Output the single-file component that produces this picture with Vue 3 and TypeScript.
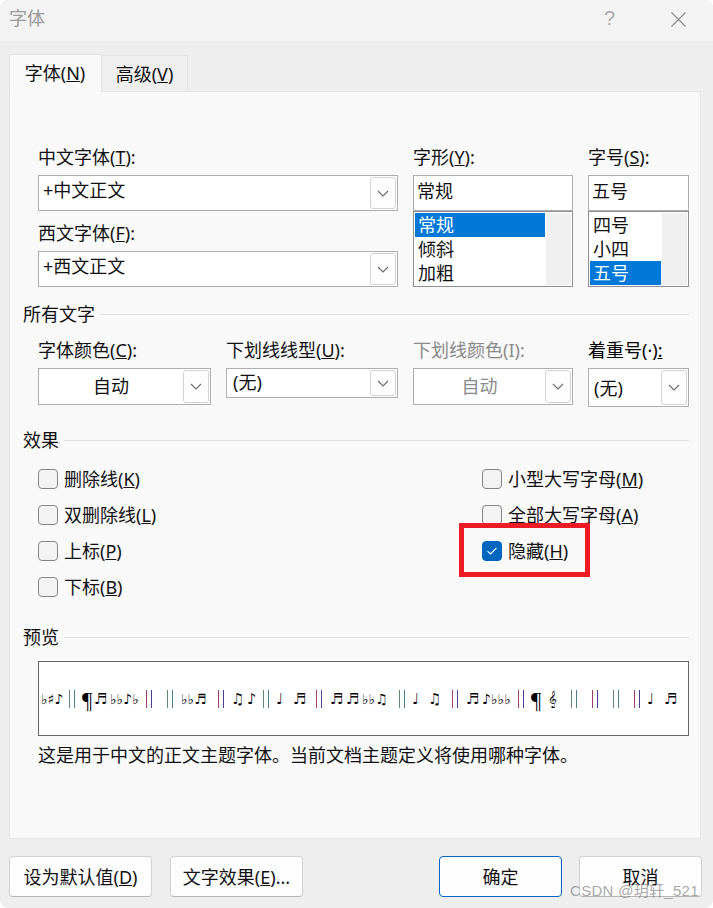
<script setup lang="ts">
interface Glyph { s: string; x: number; bar?: 'g' | 'p' }
const glyphs: Glyph[] = [
  { s: '♭♯♪', x: 41 }, { s: '', x: 69, bar: 'g' }, { s: '¶', x: 82 }, { s: '♬', x: 94 },
  { s: '♭♭♪♭', x: 110 }, { s: '', x: 146, bar: 'p' }, { s: '', x: 167, bar: 'g' }, { s: '♭♭♬', x: 181 },
  { s: '', x: 218, bar: 'p' }, { s: '♫', x: 231 }, { s: '♪', x: 247 }, { s: '', x: 263, bar: 'g' },
  { s: '♩', x: 276 }, { s: '♬', x: 293 }, { s: '', x: 316, bar: 'p' }, { s: '♬', x: 330 },
  { s: '♬', x: 346 }, { s: '♭♭♫', x: 362 }, { s: '', x: 399, bar: 'g' }, { s: '♩', x: 412 },
  { s: '♫', x: 428 }, { s: '', x: 452, bar: 'p' }, { s: '♬', x: 466 }, { s: '♪♭♭♭', x: 482 },
  { s: '', x: 518, bar: 'p' }, { s: '¶', x: 531 }, { s: '𝄞', x: 548 }, { s: '', x: 571, bar: 'g' },
  { s: '', x: 592, bar: 'p' }, { s: '', x: 613, bar: 'g' }, { s: '', x: 634, bar: 'p' }, { s: '♩', x: 647 },
  { s: '♬', x: 664 }
]
const cellWidth = (i: number): string => {
  const next = i + 1 < glyphs.length ? glyphs[i + 1].x : 680
  return `${next - glyphs[i].x}px`
}
const styleRows = ['常规', '倾斜', '加粗']
const sizeRows = ['四号', '小四', '五号']
const leftChecks = [
  { t: '删除线(', k: 'K' }, { t: '双删除线(', k: 'L' }, { t: '上标(', k: 'P' }, { t: '下标(', k: 'B' }
]
const rightChecks = [
  { t: '小型大写字母(', k: 'M' }, { t: '全部大写字母(', k: 'A' }
]
const effects = [
  { cls: 'c-color', pre: '字体颜色(', key: 'C', post: '):', value: '自动', center: true, off: false },
  { cls: 'c-line', pre: '下划线线型(', key: 'U', post: '):', value: '(无)', center: false, off: false },
  { cls: 'c-linecolor', pre: '下划线颜色(I):', key: '', post: '', value: '自动', center: true, off: true },
  { cls: 'c-mark', pre: '着重号(·)', key: ':', post: '', value: '(无)', center: false, off: false }
]
</script>

<template>
  <div class="dialog">
    <header class="titlebar">
      <span class="title">字体</span>
      <span class="help">?</span>
      <svg class="close" width="15" height="15" viewBox="0 0 15 15"><path d="M0.5 0.5 14.5 14.5M14.5 0.5 0.5 14.5" stroke="#8a8a8a" stroke-width="1.1" fill="none" /></svg>
    </header>

    <nav class="tabs">
      <div class="tab active">字体(<u>N</u>)</div>
      <div class="tab">高级(<u>V</u>)</div>
    </nav>

    <main class="panel">
      <section class="font-grid">
        <div class="names">
          <label class="lbl">中文字体(<u>T</u>):</label>
          <div class="field combo">
            <span class="val">+中文正文</span>
            <span class="drop"><svg width="12" height="7" viewBox="0 0 12 7"><path d="M1 1 6 6 11 1" stroke="#6b6b6b" stroke-width="1.1" fill="none" /></svg></span>
          </div>
          <label class="lbl second">西文字体(<u>F</u>):</label>
          <div class="field combo">
            <span class="val">+西文正文</span>
            <span class="drop"><svg width="12" height="7" viewBox="0 0 12 7"><path d="M1 1 6 6 11 1" stroke="#6b6b6b" stroke-width="1.1" fill="none" /></svg></span>
          </div>
        </div>
        <div class="picker">
          <label class="lbl">字形(<u>Y</u>):</label>
          <div class="field"><span class="val short">常规</span></div>
          <ul class="list">
            <li class="rows">
              <div v-for="(r, i) in styleRows" :key="r" class="row" :class="{ sel: i === 0 }">{{ r }}</div>
            </li>
            <li class="track"></li>
          </ul>
        </div>
        <div class="picker">
          <label class="lbl">字号(<u>S</u>):</label>
          <div class="field"><span class="val short">五号</span></div>
          <ul class="list">
            <li class="rows">
              <div v-for="(r, i) in sizeRows" :key="r" class="row" :class="{ sel: i === 2 }">{{ r }}</div>
            </li>
            <li class="track"></li>
          </ul>
        </div>
      </section>

      <div class="group g-all"><span>所有文字</span><i></i></div>
      <section class="all-grid">
        <div v-for="e in effects" :key="e.cls" class="cell" :class="[e.cls, { off: e.off }]">
          <label class="lbl">{{ e.pre }}<u v-if="e.key">{{ e.key }}</u>{{ e.post }}</label>
          <div class="field combo">
            <span class="val" :class="e.center ? 'mid' : 'plain'">{{ e.value }}</span>
            <span class="drop"><svg width="12" height="7" viewBox="0 0 12 7"><path d="M1 1 6 6 11 1" stroke="#6b6b6b" stroke-width="1.1" fill="none" /></svg></span>
          </div>
        </div>
      </section>

      <div class="group g-fx"><span>效果</span><i></i></div>
      <section class="checks">
        <div v-for="c in leftChecks" :key="c.k" class="check"><span class="box"></span><span>{{ c.t }}<u>{{ c.k }}</u>)</span></div>
        <div v-for="c in rightChecks" :key="c.k" class="check"><span class="box"></span><span>{{ c.t }}<u>{{ c.k }}</u>)</span></div>
        <div class="check hidden-row">
          <span class="box on"><svg width="12" height="10" viewBox="0 0 12 10"><path d="M1.5 5.2 4.5 8 10.5 1.8" stroke="#fff" stroke-width="1.1" fill="none" /></svg></span>
          <span>隐藏(<u>H</u>)</span>
          <span class="mark"></span>
        </div>
      </section>

      <div class="group g-pre"><span>预览</span><i></i></div>
      <section class="preview">
        <span
          v-for="(g, i) in glyphs"
          :key="i"
          class="glyph"
          :class="{ seq: g.s.length > 1 && g.s !== '𝄞', pil: g.s === '¶' }"
          :style="{ width: cellWidth(i) }"
        >
          <i v-if="g.bar" class="bar" :class="g.bar === 'g' ? 'bar-g' : 'bar-p'"></i>
          <template v-else>{{ g.s }}</template>
        </span>
      </section>
      <p class="note">这是用于中文的正文主题字体。当前文档主题定义将使用哪种字体。</p>
    </main>

    <footer class="actions">
      <button class="btn b-default">设为默认值(<u>D</u>)</button>
      <button class="btn b-effect">文字效果(<u>E</u>)...</button>
      <button class="btn b-act primary">确定</button>
      <button class="btn b-act">取消</button>
    </footer>
    <span class="watermark">CSDN @玥轩_521</span>
  </div>
</template>

<style>
html, body { background: #fff; }
</style>

<style scoped>
.dialog {
  position: relative;
  width: 713px;
  height: 908px;
  box-sizing: border-box;
  overflow: hidden;
  background: #eeeeee;
  border-radius: 8px;
  color: #111;
  font-family: "Noto Sans", "Noto Sans CJK SC", sans-serif;
  font-size: 18px;
  line-height: 24px;
}
u { text-underline-offset: 1px; text-decoration-thickness: 1px; }

.titlebar {
  height: 41px;
  display: flex;
  align-items: center;
  padding: 0 0 5px 9px;
  background: #f3f3f3;
  box-sizing: border-box;
}
.title { color: #9a9a9a; flex: 1; }
.help { color: #a8a8a8; width: 67px; font-size: 20px; font-family: "Liberation Sans", sans-serif; }
.close { margin-right: 27px; margin-top: 2px; }

.tabs {
  height: 50px;
  display: flex;
  align-items: flex-end;
  padding-left: 9px;
  box-sizing: border-box;
}
.tab {
  width: 86px;
  height: 36px;
  box-sizing: border-box;
  border: 1px solid #e3e3e3;
  border-bottom: none;
  border-left: none;
  background: #efefef;
  text-align: center;
  line-height: 36px;
}
.tab.active {
  width: 93px;
  height: 38px;
  border-left: 1px solid #e3e3e3;
  background: #f9f9f9;
  line-height: 37px;
  padding-right: 1px;
  position: relative;
  top: 1px;
}

.panel {
  width: 692px;
  height: 748px;
  margin-left: 9px;
  box-sizing: border-box;
  background: #f9f9f9;
  border: 1px solid #e5e5e5;
  padding: 54px 11px 0 13px;
}

.lbl { display: block; height: 24px; line-height: 22px; margin-bottom: 5px; white-space: nowrap; }
.field {
  display: flex;
  align-items: center;
  box-sizing: border-box;
  height: 36px;
  background: #fff;
  border: 1px solid #adadb3;
  position: relative;
}
.val { flex: 1; padding-left: 4px; position: relative; top: -3px; white-space: nowrap; }
.val.short { padding-left: 3px; top: -2px; }
.val.mid { text-align: center; padding-left: 0; top: -1px; }
.val.plain { padding-left: 6px; top: -1px; }
.c-mark .val.plain { padding-left: 5px; top: 0; }
.c-mark .lbl { color: #000; }
.combo { padding-right: 1px; }
.drop {
  width: 26px;
  height: calc(100% - 2px);
  box-sizing: border-box;
  display: flex;
  align-items: center;
  justify-content: center;
  background: #fdfdfd;
  border: 1px solid #d4d4d4;
  border-radius: 3px;
}

.font-grid {
  display: grid;
  grid-template-columns: 360px 160px 101px;
  column-gap: 15px;
  padding-left: 15px;
}
.second { margin-top: 11px; }
.list {
  list-style: none;
  margin: 0;
  box-sizing: border-box;
  height: 76px;
  padding: 1px;
  background: #fff;
  border: 1px solid #8f8f94;
  display: flex;
  gap: 1px;
}
.rows { flex: 1; }
.row { height: 24px; line-height: 24px; padding-left: 3px; }
.row.sel { background: #0078d7; color: #fff; }
.track { width: 25px; background: #f0f0f0; }

.group {
  display: flex;
  align-items: center;
  height: 24px;
  gap: 5px;
}
.group i { flex: 1; height: 1px; background: #e0e0e0; position: relative; top: -1px; }
.group span { position: relative; top: -1px; }
.g-all { margin-top: 16px; }
.g-fx { margin-top: 22px; }
.g-pre { margin-top: 21px; }

.all-grid {
  display: grid;
  grid-template-columns: 173px 172px 160px 101px;
  column-gap: 15px;
  margin-top: 12px;
  padding-left: 15px;
  height: 68px;
  align-items: start;
}
.all-grid .field { height: 37px; }
.all-grid .c-line .field { height: 30px; }
.all-grid .c-mark .field { height: 39px; }
.off { color: #8a8a8a; }

.checks {
  display: grid;
  grid-template-rows: repeat(4, 36px);
  grid-template-columns: 444px 1fr;
  grid-auto-flow: column;
  margin-top: 8px;
  padding-left: 15px;
}
.check { display: flex; align-items: center; gap: 6px; position: relative; }
.box {
  width: 20px;
  height: 20px;
  box-sizing: border-box;
  border: 1px solid #858585;
  border-radius: 4px;
  background: #f3f3f3;
}
.box.on {
  background: #0067c0;
  border-color: #0067c0;
  display: flex;
  align-items: center;
  justify-content: center;
}
.mark {
  position: absolute;
  left: -23px;
  top: -10px;
  width: 131px;
  height: 54px;
  box-sizing: border-box;
  border: 5px solid #ed1c24;
}

.preview {
  display: flex;
  align-items: flex-end;
  height: 75px;
  box-sizing: border-box;
  margin: 11px 0 0 15px;
  background: #fff;
  border: 1px solid #666;
  padding: 0 0 27px 2px;
  font-family: "DejaVu Sans", "Noto Sans", sans-serif;
  font-size: 15px;
  line-height: 18px;
  color: #000;
}
.glyph { flex: none; white-space: nowrap; }
.glyph.seq { font-size: 14px; }
.glyph.pil { font-family: "Liberation Serif", serif; font-size: 23px; position: relative; top: 2px; }
.bar {
  display: block;
  width: 6px;
  height: 18px;
  box-sizing: border-box;
  border-left: 1px solid;
  border-right: 1px solid;
}
.bar-g { border-left-color: #5d8a6a; border-right-color: #4f7f8f; }
.bar-p { border-left-color: #a33f5f; border-right-color: #4a3f9f; }
.note { margin: 7px 0 0 15px; white-space: nowrap; }

.actions {
  display: flex;
  margin: 17px 0 0 9px;
  width: 693px;
}
.btn {
  height: 41px;
  box-sizing: border-box;
  background: #fdfdfd;
  border: 1px solid #d2d2d2;
  border-bottom-color: #b5b5b5;
  border-radius: 4px;
  font: inherit;
  color: #111;
  padding: 0;
}
.b-default { width: 143px; }
.b-effect { width: 133px; margin-left: 18px; }
.b-act { width: 123px; margin-left: 17px; }
.primary { margin-left: 136px; border: 1.5px solid #0067c0; }

.watermark {
  position: absolute;
  left: 570px;
  bottom: 7px;
  font-family: "Liberation Sans", "Noto Sans CJK SC", sans-serif;
  font-size: 15px;
  line-height: 20px;
  letter-spacing: 0.3px;
  color: rgba(120, 120, 120, 0.65);
  white-space: nowrap;
}
</style>
